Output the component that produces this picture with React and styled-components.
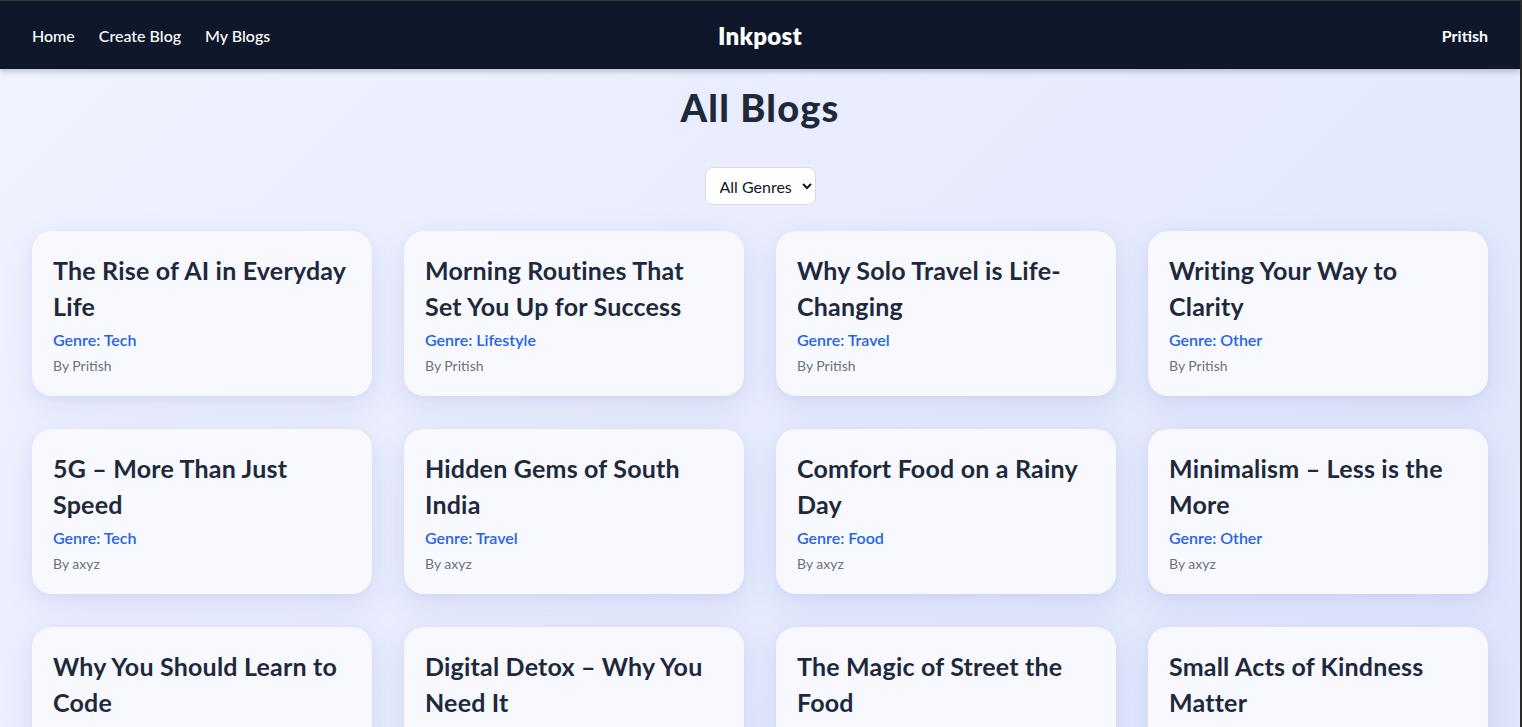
import React from "react";
import styled, { createGlobalStyle } from "styled-components";

const Global = createGlobalStyle`
  * { box-sizing: border-box; }
  html, body { margin: 0; padding: 0; }
  body {
    font-family: Lato, "Noto Sans", "Liberation Sans", sans-serif;
    background: #e6eafc;
    overflow: hidden;
  }
`;

const Frame = styled.div`
  border-top: 1px solid #3b3b3b;
  border-right: 2px solid #2b2b2b;
  min-height: 727px;
  background: linear-gradient(135deg, #f0f3ff 0%, #e8ecfd 45%, #dfe4fb 100%);
`;

const Nav = styled.nav`
  height: 68px;
  background: #0f172a;
  display: grid;
  grid-template-columns: 1fr auto 1fr;
  align-items: center;
  padding: 0 32px;
  color: #fff;
  box-shadow: 0 2px 6px rgba(15, 23, 42, 0.25);
  position: relative;
  z-index: 1;
`;

const Links = styled.div`
  display: flex;
  gap: 24px;
`;

const NavLink = styled.a`
  color: #ffffff;
  font-size: 16px;
  font-weight: 500;
  text-decoration: none;
`;

const Brand = styled.div`
  font-size: 24px;
  font-weight: 800;
  letter-spacing: 0.3px;
`;

const User = styled.div`
  justify-self: end;
  font-size: 16px;
  font-weight: 700;
`;

const Main = styled.main`
  padding: 18px 32px 32px;
  display: flex;
  flex-direction: column;
  align-items: center;
`;

const Heading = styled.h1`
  margin: 0;
  font-size: 38px;
  line-height: 40px;
  font-weight: 900;
  letter-spacing: 1.2px;
  color: #1e293b;
`;

const Select = styled.select`
  margin-top: 40px;
  height: 38px;
  padding: 0 6px 0 10px;
  font-family: inherit;
  font-size: 16px;
  color: #111827;
  background: #ffffff;
  border: 1px solid #d6dbe6;
  border-radius: 8px;
`;

const Grid = styled.div`
  margin-top: 26px;
  width: 100%;
  display: grid;
  grid-template-columns: repeat(4, 1fr);
  column-gap: 32px;
  row-gap: 33px;
`;

const Card = styled.article`
  background: #f8f9ff;
  border-radius: 20px;
  padding: 21px 21px 20px;
  min-height: 165px;
  box-shadow: 0 10px 30px rgba(99, 114, 200, 0.14), 0 2px 6px rgba(99, 114, 200, 0.06);
`;

const Title = styled.h2`
  margin: 0;
  font-size: 25px;
  line-height: 36px;
  font-weight: 700;
  letter-spacing: 0.2px;
  color: #1e293b;
`;

const Genre = styled.div`
  margin-top: 4px;
  font-size: 16px;
  line-height: 24px;
  font-weight: 600;
  color: #2563eb;
`;

const Author = styled.div`
  margin-top: 4px;
  font-size: 14px;
  line-height: 20px;
  color: #6b7280;
`;

const blogs = [
  ["The Rise of AI in Everyday Life", "Tech", "Pritish"],
  ["Morning Routines That Set You Up for Success", "Lifestyle", "Pritish"],
  ["Why Solo Travel is Life-Changing", "Travel", "Pritish"],
  ["Writing Your Way to Clarity", "Other", "Pritish"],
  ["5G – More Than Just Speed", "Tech", "axyz"],
  ["Hidden Gems of South India", "Travel", "axyz"],
  ["Comfort Food on a Rainy Day", "Food", "axyz"],
  ["Minimalism – Less is the More", "Other", "axyz"],
  ["Why You Should Learn to Code", "Tech", "axyz"],
  ["Digital Detox – Why You Need It", "Lifestyle", "axyz"],
  ["The Magic of Street the Food", "Food", "axyz"],
  ["Small Acts of Kindness Matter", "Other", "axyz"],
];

export default function App() {
  return (
    <>
      <Global />
      <Frame>
        <Nav>
          <Links>
            <NavLink href="#">Home</NavLink>
            <NavLink href="#">Create Blog</NavLink>
            <NavLink href="#">My Blogs</NavLink>
          </Links>
          <Brand>Inkpost</Brand>
          <User>Pritish</User>
        </Nav>
        <Main>
          <Heading>All Blogs</Heading>
          <Select defaultValue="all">
            <option value="all">All Genres</option>
            <option>Tech</option>
            <option>Lifestyle</option>
            <option>Travel</option>
            <option>Food</option>
            <option>Other</option>
          </Select>
          <Grid>
            {blogs.map(([t, g, a]) => (
              <Card key={t}>
                <Title>{t}</Title>
                <Genre>Genre: {g}</Genre>
                <Author>By {a}</Author>
              </Card>
            ))}
          </Grid>
        </Main>
      </Frame>
    </>
  );
}
